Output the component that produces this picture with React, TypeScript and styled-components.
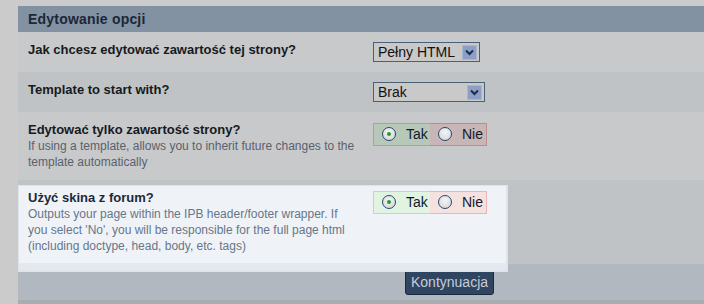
import styled, { createGlobalStyle, css } from 'styled-components';

const GlobalStyle = createGlobalStyle`
  html, body {
    margin: 0;
    padding: 0;
    background: #cbcbcb;
    overflow: hidden;
    font-family: "Liberation Sans", Arial, sans-serif;
  }
`;

const Page = styled.div`
  padding: 6px 0 0 18px;
`;

const Panel = styled.div`
  width: 863px;
`;

const Header = styled.div`
  height: 26px;
  line-height: 26px;
  padding: 0 10px;
  background: #8392a2;
  color: #1b2736;
  font-size: 14px;
  font-weight: bold;
  letter-spacing: 0.2px;
`;

const Row = styled.div<{ $alt?: boolean; $lifted?: boolean }>`
  display: grid;
  grid-template-columns: 355px 1fr;
  background: ${p => (p.$alt ? '#c0c3c6' : '#c8c9cb')};
  position: relative;
  ${p =>
    p.$lifted &&
    css`
      z-index: 1;
    `}
`;

// undimmed highlight window lying over the last row
const Spotlight = styled.div`
  position: absolute;
  top: 5px;
  left: 0;
  width: 487px;
  height: 84px;
  background: linear-gradient(#eff3f7 0, #eff3f7 77px, #e4e9ef 77px);
  border: 1px solid #dfe4ea;
  border-right-width: 2px;
  border-bottom-width: 2px;
  box-sizing: content-box;
`;

const LabelCell = styled.div`
  position: relative;
  padding: 10px 18px 10px 10px;
`;

const ValueCell = styled.div`
  position: relative;
  padding: 10px 0;
`;

const Title = styled.div<{ $lit?: boolean }>`
  font-size: 13px;
  font-weight: bold;
  line-height: 16px;
  color: ${p => (p.$lit ? '#1c2939' : '#151a20')};
`;

const Desc = styled.div<{ $lit?: boolean }>`
  font-size: 12px;
  line-height: 16px;
  color: ${p => (p.$lit ? '#66768a' : '#59626d')};
`;

const Select = styled.div<{ $width: number }>`
  width: ${p => p.$width}px;
  height: 20px;
  box-sizing: border-box;
  border: 1px solid #4b6077;
  background: #c9c9c9;
  display: flex;
  align-items: center;
  justify-content: space-between;
  padding: 0 2px 0 4px;
  font-size: 14px;
  color: #111;
`;

const Arrow = styled.div`
  width: 15px;
  height: 15px;
  box-sizing: border-box;
  background: #8d9fc6;
  border: 1px solid #a8b6d4;
  display: flex;
  align-items: center;
  justify-content: center;
`;

const RadioGroup = styled.div`
  display: inline-flex;
  height: 23px;
`;

const RadioOption = styled.label<{ $tone: 'yes' | 'no'; $lit?: boolean }>`
  display: flex;
  align-items: center;
  gap: 10px;
  width: 57px;
  box-sizing: border-box;
  padding-left: 8px;
  font-size: 14px;
  color: #111a2a;
  border: 1px solid;
  ${p =>
    p.$tone === 'yes'
      ? css`
          background: ${p.$lit ? '#e1f4e1' : '#b7c8b8'};
          border-color: ${p.$lit ? '#b2e2b2' : '#8fb291'};
          border-right: none;
        `
      : css`
          background: ${p.$lit ? '#f6e1e1' : '#c8b5b5'};
          border-color: ${p.$lit ? '#ecb5b5' : '#c08b8b'};
          border-left: none;
        `}
`;

const Circle = styled.span<{ $checked?: boolean }>`
  width: 12px;
  height: 12px;
  border-radius: 50%;
  border: 1px solid #2b4668;
  background: radial-gradient(circle at 50% 35%, #f4f4f4, #cfd3d8);
  display: flex;
  align-items: center;
  justify-content: center;
  flex-shrink: 0;

  &::after {
    content: '';
    width: 4px;
    height: 4px;
    border-radius: 50%;
    background: ${p => (p.$checked ? '#22a12a' : 'transparent')};
  }
`;

const Footer = styled.div`
  height: 36px;
  background: #b2b8bf;
  display: flex;
  justify-content: center;
  align-items: flex-start;
  padding-top: 5px;
  box-sizing: border-box;
`;

const BottomStrip = styled.div`
  height: 10px;
  background: #a8adb2;
`;

const Button = styled.button`
  height: 26px;
  padding: 0 5px;
  background: #2f4562;
  border: 1px solid #1b2a3c;
  border-radius: 3px;
  color: #c5cdd7;
  font-size: 14px;
  font-family: "Liberation Sans", Arial, sans-serif;
`;

function Chevron() {
  return (
    <svg width="9" height="7" viewBox="0 0 9 7">
      <path d="M1 1.5 L4.5 5 L8 1.5" fill="none" stroke="#1d2d45" strokeWidth="2" />
    </svg>
  );
}

function YesNo({ lit }: { lit?: boolean }) {
  return (
    <RadioGroup>
      <RadioOption $tone="yes" $lit={lit}>
        <Circle $checked />
        Tak
      </RadioOption>
      <RadioOption $tone="no" $lit={lit}>
        <Circle />
        Nie
      </RadioOption>
    </RadioGroup>
  );
}

export default function App() {
  return (
    <Page>
      <GlobalStyle />
      <Panel>
        <Header>Edytowanie opcji</Header>

        <Row>
          <LabelCell>
            <Title>Jak chcesz edytować zawartość tej strony?</Title>
          </LabelCell>
          <ValueCell>
            <Select $width={107}>
              Pełny HTML
              <Arrow>
                <Chevron />
              </Arrow>
            </Select>
          </ValueCell>
        </Row>

        <Row $alt>
          <LabelCell>
            <Title>Template to start with?</Title>
          </LabelCell>
          <ValueCell>
            <Select $width={112}>
              Brak
              <Arrow>
                <Chevron />
              </Arrow>
            </Select>
          </ValueCell>
        </Row>

        <Row>
          <LabelCell>
            <Title>Edytować tylko zawartość strony?</Title>
            <Desc>If using a template, allows you to inherit future changes to the template automatically</Desc>
          </LabelCell>
          <ValueCell>
            <YesNo />
          </ValueCell>
        </Row>

        <Row $alt $lifted>
          <Spotlight />
          <LabelCell>
            <Title $lit>Użyć skina z forum?</Title>
            <Desc $lit>
              Outputs your page within the IPB header/footer wrapper. If you select 'No', you will be
              responsible for the full page html (including doctype, head, body, etc. tags)
            </Desc>
          </LabelCell>
          <ValueCell>
            <YesNo lit />
          </ValueCell>
        </Row>

        <Footer>
          <Button>Kontynuacja</Button>
        </Footer>
        <BottomStrip />
      </Panel>
    </Page>
  );
}
